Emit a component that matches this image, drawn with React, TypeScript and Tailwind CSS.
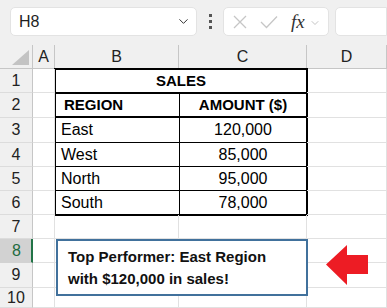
import { ChevronDown } from 'lucide-react';

const columns = ['A', 'B', 'C', 'D'];

const sales = [
  { region: 'East', amount: '120,000' },
  { region: 'West', amount: '85,000' },
  { region: 'North', amount: '95,000' },
  { region: 'South', amount: '78,000' },
];

const rowNumbers = [1, 2, 3, 4, 5, 6, 7, 8, 9, 10];

function FormulaBar() {
  return (
    <div className="h-[45px] bg-[#f0f0f0] flex items-start pt-[7px] pl-[10px] gap-0">
      <div className="w-[187px] h-[29px] bg-white border border-[#e3e3e3] rounded-[5px] flex items-center pl-[8px] pr-[5px]">
        <span className="flex-1 text-[16px] text-[#1f1f1f]">H8</span>
        <ChevronDown size={15} strokeWidth={1.6} className="text-[#333]" />
      </div>
      <div className="w-[26px] h-[29px] flex flex-col items-center justify-center gap-[3px]">
        <span className="w-[3px] h-[3px] bg-[#555]" />
        <span className="w-[3px] h-[3px] bg-[#555]" />
        <span className="w-[3px] h-[3px] bg-[#555]" />
      </div>
      <div className="w-[106px] h-[29px] bg-white border border-[#e3e3e3] rounded-[5px] flex items-center pl-[8px]">
        <svg width="14" height="14" viewBox="0 0 14 14" className="ml-[1px]">
          <path d="M1 1 L13 13 M13 1 L1 13" stroke="#c6c6c6" strokeWidth="1.3" fill="none" />
        </svg>
        <svg width="18" height="14" viewBox="0 0 18 14" className="ml-[13px]">
          <path d="M1 7 L6.5 12.5 L17 1.5" stroke="#c6c6c6" strokeWidth="1.3" fill="none" />
        </svg>
        <span className="ml-[13px] text-[19px] italic text-[#333] leading-none font-['Liberation_Serif',serif]">
          fx
        </span>
        <ChevronDown size={12} strokeWidth={1.4} className="ml-[4px] mt-[2px] text-[#aaa]" />
      </div>
      <div className="ml-[6px] flex-1 h-[29px] bg-white border border-[#e3e3e3] rounded-l-[5px]" />
    </div>
  );
}

function SalesTable() {
  return (
    <div className="col-start-3 col-span-2 row-start-2 row-span-6 -m-px border-2 border-black bg-white grid grid-cols-[124px_1fr] grid-rows-[24px_24px_25px_24px_24px_23px] text-[16px] text-black">
      <div className="col-span-2 border-b-2 border-black flex items-center justify-center font-bold text-[15px]">
        SALES
      </div>
      <div className="border-b-2 border-r border-black flex items-center pl-[8px] font-bold text-[15px]">
        REGION
      </div>
      <div className="border-b-2 border-black flex items-center justify-center font-bold text-[15px]">
        AMOUNT ($)
      </div>
      {sales.map((row, i) => {
        const last = i === sales.length - 1;
        return [
          <div
            key={row.region}
            className={`border-r border-black flex items-center pl-[5px] ${last ? '' : 'border-b'}`}
          >
            {row.region}
          </div>,
          <div
            key={row.amount}
            className={`border-black flex items-center justify-center ${last ? '' : 'border-b'}`}
          >
            {row.amount}
          </div>,
        ];
      })}
    </div>
  );
}

function Sheet() {
  return (
    <div className="relative grid grid-cols-[33px_22px_124px_128px_1fr] grid-rows-[24px_24px_25px_25px_24px_24px_24px_24px_24px_25px_20px] text-[16px]">
      <div className="bg-[#f0f0f0] border-r border-b border-[#c6c6c6] flex items-end justify-end pr-[3px] pb-[3px]">
        <svg width="17" height="15" viewBox="0 0 17 15">
          <path d="M17 0 L17 15 L0 15 Z" fill="#c3c3c3" />
        </svg>
      </div>
      {columns.map((c) => (
        <div
          key={c}
          className="bg-[#f0f0f0] border-r border-b border-[#c6c6c6] flex items-center justify-center text-[#222]"
        >
          {c}
        </div>
      ))}

      <SalesTable />

      {rowNumbers.map((n) => {
        const selected = n === 8;
        return [
          <div
            key={`h${n}`}
            className={
              selected
                ? 'bg-[#d2d2d2] border-r-2 border-r-[#217346] border-b border-b-[#d2d2d2] flex items-center justify-center pl-[2px] text-[#1d6b40]'
                : 'bg-[#f0f0f0] border-r border-b border-r-[#c6c6c6] border-b-[#dcdcdc] flex items-center justify-center text-[#222]'
            }
          >
            {n}
          </div>,
          ...columns
            .filter((c) => n > 6 || (c !== 'B' && c !== 'C'))
            .map((c) => (
              <div key={`${c}${n}`} className="border-r border-b border-[#e1e1e1]" />
            )),
        ];
      })}

      <div className="absolute left-[56px] top-[194px] w-[252px] h-[57px] border-2 border-[#41719c] bg-white pl-[10px] pt-[5px] font-bold text-[15px] leading-[22px] text-[#111]">
        <p>Top Performer: East Region</p>
        <p>with $120,000 in sales!</p>
      </div>

      <svg className="absolute left-[326px] top-[200px]" width="42" height="41" viewBox="0 0 42 41">
        <path d="M0 19.5 L21 0 L21 10 L42 10 L42 29 L21 29 L21 40 Z" fill="#ed1c24" />
      </svg>
    </div>
  );
}

export default function App() {
  return (
    <div className="w-[387px] h-[308px] overflow-hidden bg-white font-['Liberation_Sans',Arial,sans-serif]">
      <FormulaBar />
      <Sheet />
    </div>
  );
}
